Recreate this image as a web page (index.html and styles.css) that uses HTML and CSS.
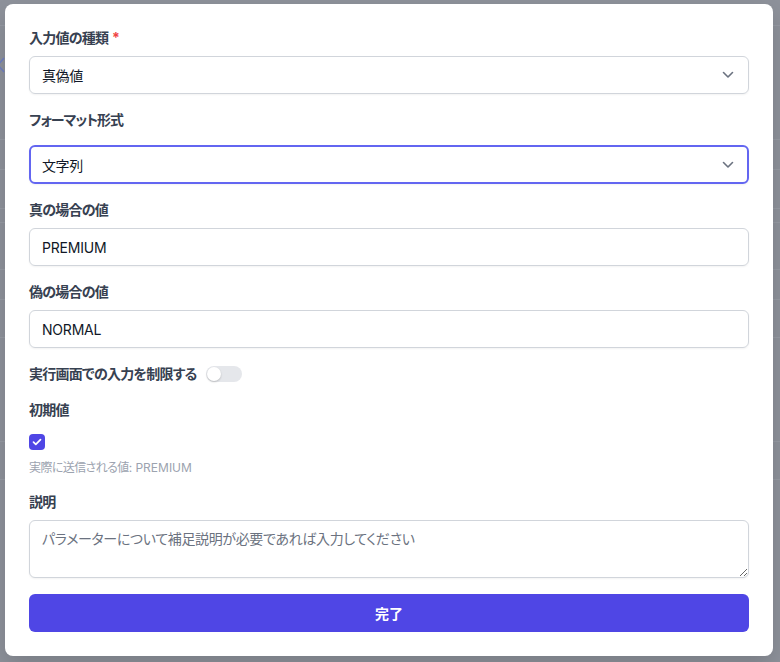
FILE: index.html
```html
<!DOCTYPE html>
<html lang="ja">
<head>
<meta charset="utf-8">
<title>入力値の設定</title>
<link rel="stylesheet" href="styles.css">
</head>
<body>
<div class="backdrop">
  <div class="bg-row h26"></div>
  <div class="bg-row h114"></div>
  <div class="bg-row h30"></div>
  <div class="bg-row h39"></div>
  <div class="bg-row h14"></div>
  <div class="bg-row h47"></div>
  <div class="bg-row h30"></div>
  <div class="bg-row h38"></div>
  <div class="bg-row h104"></div>
  <div class="bg-row h38"></div>
  <svg class="bg-arrow" width="10" height="16" viewBox="0 0 10 16"><path d="M8 1 L2 8 L8 15" fill="none" stroke="#6f7fc4" stroke-width="1.5"/></svg>
</div>

<div class="modal">
  <div class="form">
    <div class="field">
      <div class="label">入力値の種類 <span class="req">*</span></div>
      <div class="select">
        <span class="ja">真偽値</span>
        <svg class="chev" width="12" height="8" viewBox="0 0 12 8"><path d="M1.5 1.5 L6 6 L10.5 1.5" fill="none" stroke="#6b7280" stroke-width="1.6" stroke-linecap="round" stroke-linejoin="round"/></svg>
      </div>
    </div>

    <div class="field">
      <div class="label label-wide">フォーマット形式</div>
      <div class="select focus">
        <span class="ja">文字列</span>
        <svg class="chev" width="12" height="8" viewBox="0 0 12 8"><path d="M1.5 1.5 L6 6 L10.5 1.5" fill="none" stroke="#6b7280" stroke-width="1.6" stroke-linecap="round" stroke-linejoin="round"/></svg>
      </div>
    </div>

    <div class="field">
      <div class="label">真の場合の値</div>
      <div class="input">PREMIUM</div>
    </div>

    <div class="field">
      <div class="label">偽の場合の値</div>
      <div class="input">NORMAL</div>
    </div>

    <div class="toggle-row">
      <span class="label-inline">実行画面での入力を制限する</span>
      <span class="toggle"><span class="knob"></span></span>
    </div>

    <div class="field">
      <div class="label">初期値</div>
      <div class="check-row">
        <span class="checkbox">
          <svg width="10" height="8" viewBox="0 0 10 8"><path d="M1.5 4.2 L3.8 6.4 L8.5 1.6" fill="none" stroke="#fff" stroke-width="1.7" stroke-linecap="round" stroke-linejoin="round"/></svg>
        </span>
      </div>
      <div class="help"><span class="help-ja">実際に送信される値</span>: PREMIUM</div>
    </div>

    <div class="field">
      <div class="label">説明</div>
      <textarea class="textarea" placeholder="パラメーターについて補足説明が必要であれば入力してください"></textarea>
    </div>

    <button class="btn">完了</button>
  </div>
</div>
</body>
</html>
```

FILE: styles.css
```css
* { box-sizing: border-box; }
html, body { margin: 0; padding: 0; }
body {
  width: 780px;
  height: 662px;
  overflow: hidden;
  background: #8e929b;
  font-family: "Inter", "Noto Sans CJK JP", sans-serif;
  font-feature-settings: "palt";
  position: relative;
}

.backdrop { position: absolute; inset: 0; }
.bg-row { border-bottom: 1px solid #979ba4; }
.h26 { height: 26px; }
.h114 { height: 114px; }
.h30 { height: 30px; }
.h39 { height: 39px; }
.h14 { height: 14px; }
.h47 { height: 47px; }
.h38 { height: 38px; }
.h104 { height: 104px; }
.bg-arrow { position: absolute; left: -4px; top: 57px; }

.modal {
  position: absolute;
  left: 5px;
  top: 4px;
  width: 768px;
  background: #fff;
  border-radius: 8px;
  padding: 24px;
  box-shadow: 0 10px 25px rgba(0,0,0,0.15);
}

.form { display: flex; flex-direction: column; gap: 16px; }

.field { display: flex; flex-direction: column; }

.label {
  font-size: 14px;
  line-height: 20px;
  font-weight: 600;
  color: #374151;
  margin-bottom: 8px;
  letter-spacing: -0.75px;
}
.label-wide { margin-bottom: 15px; letter-spacing: -1px; }
.req { color: #ef4444; margin-left: 1px; font-weight: 700; }

.select, .input {
  height: 38px;
  border: 1px solid #d1d5db;
  border-radius: 6px;
  padding: 0 14px 0 12px;
  display: flex;
  align-items: center;
  justify-content: space-between;
  font-size: 14px;
  color: #111827;
  box-shadow: 0 1px 2px rgba(0,0,0,0.05);
}
.input { letter-spacing: -0.2px; }
.ja { letter-spacing: -0.4px; }
.select.focus {
  height: 39px;
  border: 2px solid #6366f1;
  padding-left: 11px;
  padding-right: 13px;
}
.chev { flex: none; }

.toggle-row {
  display: flex;
  align-items: center;
  height: 20px;
  gap: 9px;
}
.label-inline {
  font-size: 14px;
  line-height: 20px;
  font-weight: 600;
  color: #374151;
  letter-spacing: -0.75px;
}
.toggle {
  width: 36px;
  height: 16px;
  border-radius: 8px;
  background: #e5e7eb;
  display: flex;
  align-items: center;
  padding: 1px;
}
.knob {
  width: 14px;
  height: 14px;
  border-radius: 50%;
  background: #fff;
  box-shadow: 0 1px 2px rgba(0,0,0,0.2);
}

.check-row { display: flex; margin-top: 6px; }
.checkbox {
  width: 16px;
  height: 16px;
  border-radius: 4px;
  background: #4f46e5;
  display: flex;
  align-items: center;
  justify-content: center;
}
.help {
  margin-top: 10px;
  font-size: 12px;
  line-height: 16px;
  color: #9ca3af;
}
.help-ja { letter-spacing: -0.6px; }

.textarea {
  display: block;
  width: 100%;
  height: 58px;
  border: 1px solid #d1d5db;
  border-radius: 6px;
  padding: 8px 12px;
  font-family: "Inter", "Noto Sans CJK JP", sans-serif;
  font-feature-settings: "palt";
  font-size: 14px;
  line-height: 20px;
  letter-spacing: -0.35px;
  color: #111827;
  box-shadow: 0 1px 2px rgba(0,0,0,0.05);
  outline: none;
}
.textarea::placeholder { color: #6b7280; opacity: 1; }

.btn {
  height: 38px;
  border: none;
  border-radius: 6px;
  background: #4f46e5;
  color: #fff;
  font-family: "Inter", "Noto Sans CJK JP", sans-serif;
  font-size: 14px;
  font-weight: 700;
  cursor: pointer;
}
```
